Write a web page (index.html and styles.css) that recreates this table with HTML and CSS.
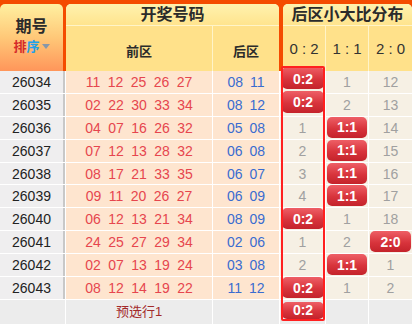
FILE: index.html
```html
<!DOCTYPE html>
<html lang="zh-CN">
<head>
<meta charset="utf-8">
<title>后区小大比分布</title>
<link rel="stylesheet" href="styles.css">
</head>
<body>
<div class="board">
  <div class="head">
    <div class="h-issue">
      <div class="h-issue-title">期号</div>
      <div class="sort"><span class="s1">排</span><span class="s2">序</span><span class="caret"></span></div>
    </div>
    <div class="h-group h-draw">
      <div class="h-title">开奖号码</div>
      <div class="h-subs draw-subs"><div>前区</div><div>后区</div></div>
    </div>
    <div class="h-group h-dist">
      <div class="h-title">后区小大比分布</div>
      <div class="h-subs dist-subs"><div>0 : 2</div><div>1 : 1</div><div>2 : 0</div></div>
    </div>
  </div>

  <div class="grid">
    <div class="c issue">26034</div>
    <div class="c front"><span>11</span><span>12</span><span>25</span><span>26</span><span>27</span></div>
    <div class="c back"><span>08</span><span>11</span></div>
    <div class="c d dz"><span class="badge lift1">0:2</span></div>
    <div class="c d">1</div>
    <div class="c d">12</div>

    <div class="c issue">26035</div>
    <div class="c front"><span>02</span><span>22</span><span>30</span><span>33</span><span>34</span></div>
    <div class="c back"><span>08</span><span>12</span></div>
    <div class="c d dz"><span class="badge lift2">0:2</span></div>
    <div class="c d">2</div>
    <div class="c d">13</div>

    <div class="c issue">26036</div>
    <div class="c front"><span>04</span><span>07</span><span>16</span><span>26</span><span>32</span></div>
    <div class="c back"><span>05</span><span>08</span></div>
    <div class="c d dz">1</div>
    <div class="c d"><span class="badge">1:1</span></div>
    <div class="c d">14</div>

    <div class="c issue">26037</div>
    <div class="c front"><span>07</span><span>12</span><span>13</span><span>28</span><span>32</span></div>
    <div class="c back"><span>06</span><span>08</span></div>
    <div class="c d dz">2</div>
    <div class="c d"><span class="badge">1:1</span></div>
    <div class="c d">15</div>

    <div class="c issue">26038</div>
    <div class="c front"><span>08</span><span>17</span><span>21</span><span>33</span><span>35</span></div>
    <div class="c back"><span>06</span><span>07</span></div>
    <div class="c d dz">3</div>
    <div class="c d"><span class="badge">1:1</span></div>
    <div class="c d">16</div>

    <div class="c issue">26039</div>
    <div class="c front"><span>09</span><span>11</span><span>20</span><span>26</span><span>27</span></div>
    <div class="c back"><span>06</span><span>09</span></div>
    <div class="c d dz">4</div>
    <div class="c d"><span class="badge">1:1</span></div>
    <div class="c d">17</div>

    <div class="c issue">26040</div>
    <div class="c front"><span>06</span><span>12</span><span>13</span><span>21</span><span>34</span></div>
    <div class="c back"><span>08</span><span>09</span></div>
    <div class="c d dz"><span class="badge">0:2</span></div>
    <div class="c d">1</div>
    <div class="c d">18</div>

    <div class="c issue">26041</div>
    <div class="c front"><span>24</span><span>25</span><span>27</span><span>29</span><span>34</span></div>
    <div class="c back"><span>02</span><span>06</span></div>
    <div class="c d dz">1</div>
    <div class="c d">2</div>
    <div class="c d"><span class="badge">2:0</span></div>

    <div class="c issue">26042</div>
    <div class="c front"><span>02</span><span>07</span><span>13</span><span>19</span><span>24</span></div>
    <div class="c back"><span>03</span><span>08</span></div>
    <div class="c d dz">2</div>
    <div class="c d"><span class="badge">1:1</span></div>
    <div class="c d">1</div>

    <div class="c issue">26043</div>
    <div class="c front"><span>08</span><span>12</span><span>14</span><span>19</span><span>22</span></div>
    <div class="c back"><span>11</span><span>12</span></div>
    <div class="c d dz"><span class="badge">0:2</span></div>
    <div class="c d">1</div>
    <div class="c d">2</div>

    <div class="c f"></div>
    <div class="c f note">预选行1</div>
    <div class="c f"></div>
    <div class="c f dz"><span class="badge pick">0:2</span></div>
    <div class="c f"></div>
    <div class="c f"></div>
  </div>

  <div class="frame"></div>
</div>
</body>
</html>
```
FILE: styles.css
```css
body {
  margin: 0;
  background: #ececec;
  font-family: "Liberation Sans", "Noto Sans CJK SC", sans-serif;
}

.board {
  position: relative;
  width: 412px;
  height: 324px;
  overflow: hidden;
  background: #ececec;
}

/* ---------- header ---------- */
.head {
  display: flex;
  height: 71px;
  padding-top: 4px;
  box-sizing: border-box;
  background: #f44b00;
}

.h-issue {
  width: 63px;
  margin-right: 3px;
  border-radius: 5px 5px 0 0;
  background: linear-gradient(#fff0a0, #ffc878 50%, #ff965a);
  display: flex;
  flex-direction: column;
  align-items: center;
  justify-content: center;
  padding-bottom: 2px;
  box-sizing: border-box;
}

.h-issue-title {
  font-size: 16px;
  font-weight: bold;
  line-height: 20px;
  color: #2b2b2b;
}

.sort {
  display: flex;
  align-items: center;
  font-size: 13px;
  font-weight: bold;
  line-height: 19px;
}

.s1 { color: #d42a2a; }
.s2 { color: #22a0ea; }

.caret {
  width: 0;
  height: 0;
  border-left: 4.5px solid transparent;
  border-right: 4.5px solid transparent;
  border-top: 5px solid #8797aa;
  margin-left: 2px;
}

.h-group {
  display: flex;
  flex-direction: column;
  border-radius: 5px 5px 0 0;
  overflow: hidden;
  background: #fff4c8;
}

.h-draw { width: 213px; margin-right: 4px; }
.h-dist { width: 129px; }

.h-title {
  height: 21px;
  line-height: 22px;
  text-align: center;
  font-size: 16px;
  font-weight: bold;
  color: #2b2b2b;
  background: linear-gradient(#fff2ae, #ffe48e);
  margin-bottom: 1px;
}

.h-subs {
  flex: 1;
  display: grid;
  column-gap: 1px;
}

.draw-subs { grid-template-columns: 146px 66px; }
.dist-subs { grid-template-columns: 42px 42px 43px; }

.h-subs > div {
  background: #ffe18a;
  display: flex;
  align-items: center;
  justify-content: center;
  color: #2b2b2b;
}

.draw-subs > div {
  font-size: 13px;
  font-weight: bold;
  padding-top: 3px;
}

.dist-subs > div {
  font-size: 15px;
  color: #333;
}

/* ---------- body ---------- */
.grid {
  display: grid;
  grid-template-columns: 65px 146px 66px 45px 42px 43px;
  grid-template-rows: repeat(10, 21.9px) 24px;
  gap: 1px;
  background: #fff;
}

.c {
  display: flex;
  align-items: center;
  justify-content: center;
  font-size: 14px;
  line-height: 16px;
}

.issue {
  background: #efeeef;
  border-right: 2px solid #c8c8c8;
  color: #222;
}

.front,
.back {
  background: #fee5cf;
}

.front {
  color: #e6464e;
  gap: 7.4px;
}

.back {
  color: #3a6cd0;
  gap: 7px;
}

.d {
  background: #f6f0e4;
  color: #a0a0a0;
}

.badge {
  align-self: flex-start;
  flex: 1;
  height: 21px;
  margin: 0 1px;
  border-radius: 5px;
  background: linear-gradient(#ee5f66, #d8343c 55%, #c4232b);
  color: #fff;
  font-weight: bold;
  font-size: 14px;
  display: flex;
  align-items: center;
  justify-content: center;
}

.dz .badge { margin: 0 1px 0 2px; }

.badge.lift1 {
  margin-top: -4px;
  height: 22px;
  padding-top: 2px;
  box-sizing: border-box;
}

.badge.lift2 {
  margin-top: -3px;
  height: 22px;
  padding-top: 1px;
  box-sizing: border-box;
}

.badge.pick {
  margin-top: 2px;
  height: 17px;
}

.f {
  background: #ececec;
}

.note {
  color: #a32b2b;
  font-size: 13px;
}

/* highlight frame over the 0:2 column */
.frame {
  position: absolute;
  left: 281px;
  top: 66px;
  width: 44px;
  height: 255px;
  border: 2px solid #ff2020;
  border-radius: 2px;
  box-sizing: border-box;
  pointer-events: none;
}
```
